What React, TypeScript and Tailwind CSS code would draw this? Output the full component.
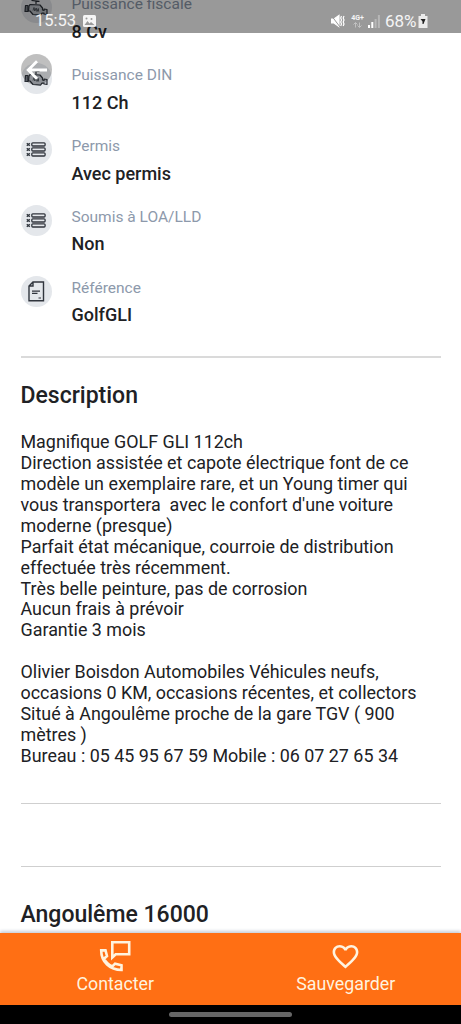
import React from "react";
import { MdFavoriteBorder } from "react-icons/md";

function EngineIcon() {
  return (
    <svg width="24" height="18" viewBox="0 0 24 18" fill="none" stroke="#2b3038" strokeWidth="1.2" strokeLinejoin="round">
      <path d="M7.500 1.500l8 .8M12 2v3M6 5.500l10 .5 2.500 3v2l1.500.5v-1.500l3 .5v5l-3-.5v-1l-2 .2-1.500 2-7.500-.7-3-3.500H4.500l.5-5z" fill="#bcc1c8" />
      <path d="M1.500 6.500h2.500v6H1z" fill="#7c828b" />
      <path d="M9 11.500l1-3 .8 3.500 1.400-3 .8 3.500 1.300-3 .3 3" strokeWidth=".7" />
    </svg>
  );
}

function ListIcon() {
  return (
    <svg width="20" height="15" viewBox="0 0 20 15" fill="none" stroke="#30353d" strokeWidth="1.3">
      <path d="M.8 1.200l3 2.600M3.800 1.200l-3 2.600M.8 6.200l3 2.600M3.800 6.200l-3 2.600M.8 11.200l3 2.600M3.800 11.200l-3 2.600" strokeWidth="1.4" />
      <rect x="5.800" y=".8" width="13.300" height="3.200" rx="1" />
      <rect x="5.800" y="5.800" width="13.300" height="3.200" rx="1" />
      <rect x="5.800" y="10.800" width="13.300" height="3.200" rx="1" />
    </svg>
  );
}

function DocumentIcon() {
  return (
    <svg width="17" height="21" viewBox="0 0 17 21" fill="none" stroke="#30353d" strokeWidth="1.4">
      <path d="M5 1h10.500v18.700H1V5zM5 1v4H1" />
      <path d="M4 10.200h8M4 12.300h5.500M10.500 17h2.500" strokeWidth="1.2" />
    </svg>
  );
}

function ContactIcon() {
  return (
    <svg width="32" height="32" viewBox="0 0 32 32" fill="none" stroke="currentColor" strokeWidth="2.6" strokeLinejoin="miter">
      <path d="M13.300 2.300H30.200V14.200H16.700L13.300 17.500z" />
      <path d="M2.200 10.400H6.500L8 16L5 18.800C7 22.500 9.700 24.700 13.300 26.500L16.100 23.700L22.500 25.200V30C11 30 2.200 22 2.200 10.400z" strokeWidth="2.6" />
    </svg>
  );
}

const rows = [
  { label: "Puissance fiscale", value: "8 Cv", icon: <EngineIcon /> },
  { label: "Puissance DIN", value: "112 Ch", icon: <EngineIcon /> },
  { label: "Permis", value: "Avec permis", icon: <ListIcon /> },
  { label: "Soumis à LOA/LLD", value: "Non", icon: <ListIcon /> },
  { label: "Référence", value: "GolfGLI", icon: <DocumentIcon /> },
];

const description = `Magnifique GOLF GLI 112ch
Direction assistée et capote électrique font de ce
modèle un exemplaire rare, et un Young timer qui
vous transportera  avec le confort d'une voiture
moderne (presque)
Parfait état mécanique, courroie de distribution
effectuée très récemment.
Très belle peinture, pas de corrosion
Aucun frais à prévoir
Garantie 3 mois

Olivier Boisdon Automobiles Véhicules neufs,
occasions 0 KM, occasions récentes, et collectors
Situé à Angoulême proche de la gare TGV ( 900
mètres )
Bureau : 05 45 95 67 59 Mobile : 06 07 27 65 34`;

function StatusBar() {
  return (
    <div className="absolute inset-x-0 top-0 flex h-[33px] items-center bg-black/40 pt-[9px] pr-[33px] pl-[35px] text-[17px] leading-6 text-white/90">
      <span className="w-[41px] text-[16.5px]">15:53</span>
      <svg className="ml-[7px]" width="13" height="12" viewBox="0 0 13 12">
        <rect width="13" height="12" rx="1.5" fill="#fff" fillOpacity=".9" />
        <path d="M1.500 10l3-4 2 2.500 1.500-1.500 3.500 3z" fill="#999" />
        <circle cx="3.500" cy="3.500" r="1" fill="#999" />
        <circle cx="8.500" cy="4" r="1" fill="#999" />
      </svg>
      <div className="ml-auto flex items-center">
        <svg width="14" height="14" viewBox="0 0 14 14" fill="none" stroke="#fff" strokeWidth="1.2">
          <path d="M.5 5H3l5-3.500v11L3 9H.5z" fill="#fff" />
          <path d="M0 1l9 12" stroke="#999" strokeWidth="1" />
          <path d="M10.500 2l-.8 2 .8 2-.8 2 .8 2-.8 2M13 2l-.8 2 .8 2-.8 2 .8 2-.8 2" />
        </svg>
        <div className="ml-[6px] flex w-[13px] flex-col items-center text-[7px] leading-[7px] font-bold">
          <span>4G+</span>
          <svg width="9" height="6" viewBox="0 0 9 6" stroke="#ccc" fill="none">
            <path d="M2.500 5.500V1M.5 2.500L2.500 .5l2 2M6.500 .5V5M4.500 3.500l2 2 2-2" strokeWidth=".8" />
          </svg>
        </div>
        <svg className="ml-[4px]" width="12" height="13" viewBox="0 0 12 13" fill="#fff">
          <rect y="10" width="2" height="3" />
          <rect x="3.300" y="7" width="2" height="6" />
          <rect x="6.600" y="4" width="2" height="9" fillOpacity=".3" />
          <rect x="9.900" y="0" width="2" height="13" fillOpacity=".3" />
        </svg>
        <span className="mr-[1px] ml-[5px] w-[32px] text-[17px]">68%</span>
        <svg width="10" height="14" viewBox="0 0 10 14">
          <path d="M3 0h4v2h2.500v12h-9V2H3z" fill="#fff" fillOpacity=".8" />
          <path d="M2.500 5h5L5.500 10H4.500V7.500z" fill="#222" />
        </svg>
      </div>
    </div>
  );
}

export default function App() {
  return (
    <div className="relative flex h-[1024px] w-[461px] flex-col overflow-hidden bg-white font-['Roboto',sans-serif] text-[#202124]">
      <main className="min-h-0 flex-1 overflow-hidden pr-[20.5px] pl-[20.5px]">
        <div className="-mt-[8px]">
          {rows.map((row) => (
            <div key={row.label} className="flex h-[70.9px] items-start">
              <div className="flex size-[31px] shrink-0 items-center justify-center rounded-full bg-[#e4e7eb]">{row.icon}</div>
              <div className="ml-[20px] pt-[2px]">
                <div className="text-[15.5px] leading-5 text-[#8d99ab]">{row.label}</div>
                <div className="mt-[7.8px] text-[18px] leading-5 font-medium">{row.value}</div>
              </div>
            </div>
          ))}
        </div>
        <hr className="mt-[10px] border-t-2 border-[#dadada]" />
        <h2 className="mt-[21.5px] text-[23px] leading-8 font-medium">Description</h2>
        <p className="mt-[20px] text-[17.9px] leading-[20.93px] whitespace-pre">{description}</p>
        <hr className="mt-[36px] border-t border-[#cfcfcf]" />
        <hr className="mt-[62px] border-t border-[#cfcfcf]" />
        <h2 className="mt-[32.5px] text-[23px] leading-8 font-medium">Angoulême 16000</h2>
      </main>
      <footer className="z-10 grid h-[72px] shrink-0 grid-cols-2 bg-[#ff6f14] text-[17.8px] leading-6 text-[#fff3df] shadow-[0_-2px_3px_#c9ced8]">
        <div className="flex flex-col items-center pt-[7px]">
          <ContactIcon />
          <span>Contacter</span>
        </div>
        <div className="flex flex-col items-center pt-[8px]">
          <MdFavoriteBorder size={31} />
          <span>Sauvegarder</span>
        </div>
      </footer>
      <div className="z-10 flex h-[19px] shrink-0 justify-center bg-black pt-[7px]">
        <div className="h-[5px] w-[123px] rounded-full bg-[#666]" />
      </div>
      <StatusBar />
      <div className="absolute top-[54px] left-[21px] flex size-[31px] items-center justify-center rounded-full bg-black/25">
        <svg width="22" height="20" viewBox="0 0 22 20" fill="none" stroke="#fff" strokeWidth="2.8">
          <path d="M21 10H2.500M11 1.200L2.200 10l8.800 8.800" />
        </svg>
      </div>
    </div>
  );
}
